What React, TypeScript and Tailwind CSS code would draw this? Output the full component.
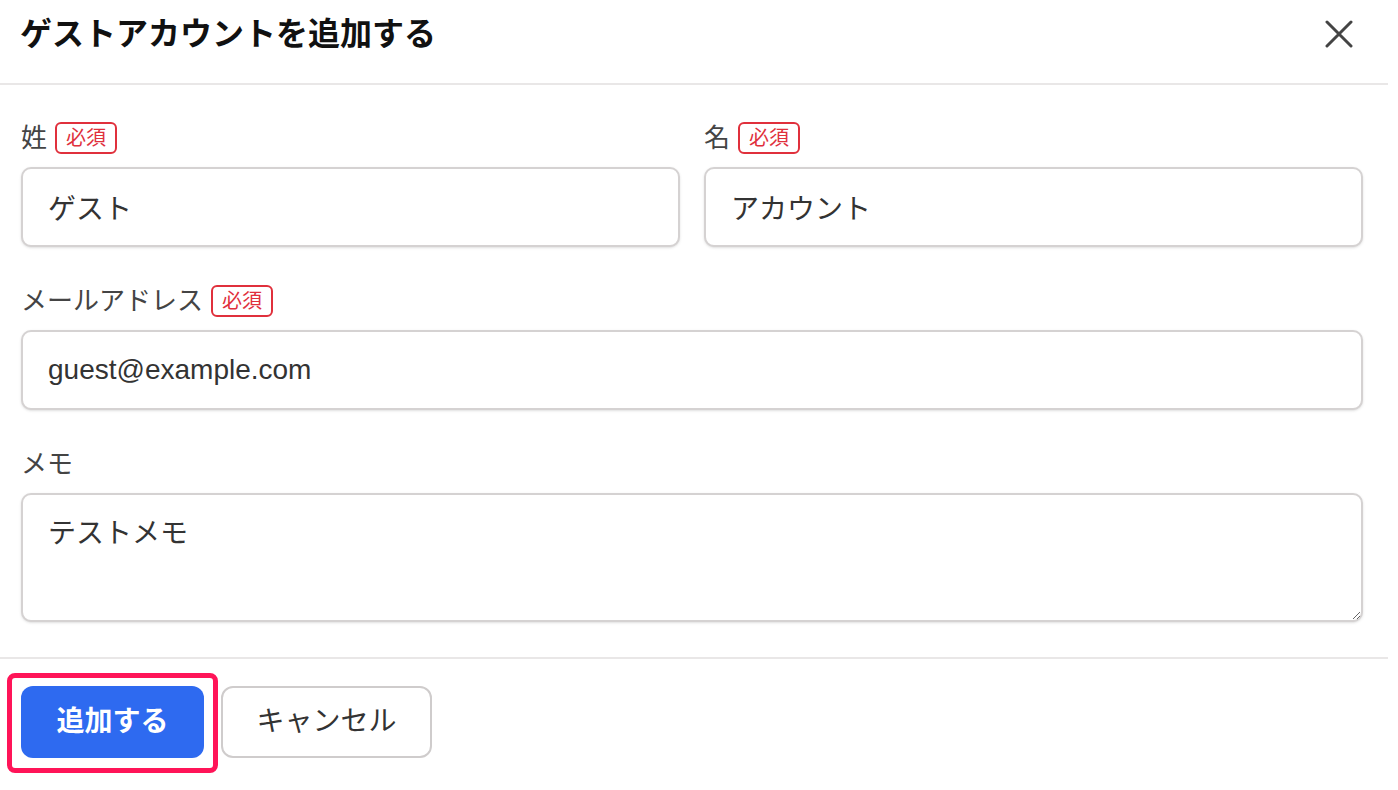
const font = {
  fontFamily: '"Liberation Sans", "Noto Sans CJK JP", sans-serif',
};

const Required = () => (
  <span className="h-8 px-[9px] flex items-center border-2 border-[#e0303c] rounded-[6px] text-[20px] leading-none text-[#e0303c]">
    必須
  </span>
);

const Label = ({ text, required }: { text: string; required?: boolean }) => (
  <div className="h-8 mb-[13px] flex items-center gap-2">
    <span className="text-[26px] leading-none text-[#444]">{text}</span>
    {required && <Required />}
  </div>
);

const inputCls =
  "w-full h-[80px] px-[25px] bg-white border-2 border-[#d5d2d2] rounded-[10px] shadow-sm text-[28px] text-[#333] outline-none";

const App = () => {
  return (
    <div className="w-[1388px] h-[790px] bg-white" style={font}>
      {/* header */}
      <div className="h-[85px] pl-5 pr-[35px] pt-[14px] flex justify-between border-b-2 border-[#e9e7e7]">
        <h1 className="text-[32px] leading-10 font-bold text-[#111]">ゲストアカウントを追加する</h1>
        <button className="w-[28px] h-[28px] mt-[6px] text-[#444]">
          <svg width="28" height="28" viewBox="0 0 28 28" fill="none" stroke="currentColor" strokeWidth="3" strokeLinecap="round">
            <path d="M2 2 L26 26 M26 2 L2 26" />
          </svg>
        </button>
      </div>

      {/* body */}
      <div className="pl-[21px] pr-[25px] pt-[37px] pb-[35px] flex flex-col gap-[38px] border-b-2 border-[#e9e7e7]">
        <div className="grid grid-cols-2 gap-6">
          <div>
            <Label text="姓" required />
            <input className={inputCls} defaultValue="ゲスト" />
          </div>
          <div>
            <Label text="名" required />
            <input className={inputCls} defaultValue="アカウント" />
          </div>
        </div>
        <div>
          <Label text="メールアドレス" required />
          <input className={inputCls} defaultValue="guest@example.com" />
        </div>
        <div>
          <Label text="メモ" />
          <textarea
            className="block w-full h-[129px] px-[25px] pt-[19px] bg-white border-2 border-[#d5d2d2] rounded-[10px] shadow-sm text-[28px] leading-10 text-[#333] outline-none"
            defaultValue="テストメモ"
          />
        </div>
      </div>

      {/* footer */}
      <div className="pl-[21px] pt-[27px] flex gap-[17px]">
        <div className="relative">
          <button className="w-[183px] h-[72px] bg-[#2e6af0] rounded-[12px] text-white text-[28px] font-bold">
            追加する
          </button>
          <div className="absolute -left-[14px] -right-[14px] -top-[13px] -bottom-[15px] border-[5px] border-[#ff1458] rounded-[8px]"></div>
        </div>
        <button className="w-[211px] h-[72px] bg-white border-2 border-[#cfcccc] rounded-[12px] text-[#333] text-[28px]">
          キャンセル
        </button>
      </div>
    </div>
  );
};

export default App;
